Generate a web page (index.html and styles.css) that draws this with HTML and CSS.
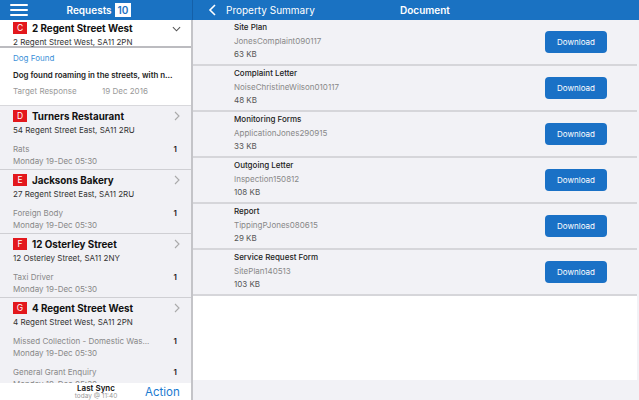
FILE: index.html
```html
<!DOCTYPE html>
<html>
<head>
<meta charset="utf-8">
<link rel="stylesheet" href="styles.css">
</head>
<body>
<div class="app">
  <aside class="left">
    <header class="lhead">
      <span class="burger"><i></i><i></i><i></i></span>
      <span class="ltitle">Requests <b class="count">10</b></span>
    </header>
    <div class="llist">
      <div class="item sel">
        <div class="top">
          <div class="trow"><span class="badge">C</span><span class="name">2 Regent Street West</span>
            <svg class="chev-down" viewBox="0 0 10 6"><path d="M1 1l4 4 4-4" fill="none" stroke="#555" stroke-width="1.2"/></svg>
          </div>
          <div class="addr">2 Regent Street West, SA11 2PN</div>
        </div>
        <div class="detail">
          <div class="dtype">Dog Found</div>
          <div class="ddesc">Dog found roaming in the streets, with n...</div>
          <div class="dtarget"><span class="dl">Target Response</span><span>19 Dec 2016</span></div>
        </div>
      </div>
      <div class="item">
        <div class="trow"><span class="badge">D</span><span class="name">Turners Restaurant</span>
          <svg class="chev" viewBox="0 0 6 10"><path d="M1 1l4 4-4 4" fill="none" stroke="#aaa" stroke-width="1.1"/></svg></div>
        <div class="addr">54 Regent Street East, SA11 2RU</div>
        <div class="sub"><div class="srow"><span>Rats</span><b>1</b></div><div class="sdate">Monday 19-Dec 05:30</div></div>
      </div>
      <div class="item">
        <div class="trow"><span class="badge">E</span><span class="name">Jacksons Bakery</span>
          <svg class="chev" viewBox="0 0 6 10"><path d="M1 1l4 4-4 4" fill="none" stroke="#aaa" stroke-width="1.1"/></svg></div>
        <div class="addr">27 Regent Street East, SA11 2RU</div>
        <div class="sub"><div class="srow"><span>Foreign Body</span><b>1</b></div><div class="sdate">Monday 19-Dec 05:30</div></div>
      </div>
      <div class="item">
        <div class="trow"><span class="badge">F</span><span class="name">12 Osterley Street</span>
          <svg class="chev" viewBox="0 0 6 10"><path d="M1 1l4 4-4 4" fill="none" stroke="#aaa" stroke-width="1.1"/></svg></div>
        <div class="addr">12 Osterley Street, SA11 2NY</div>
        <div class="sub"><div class="srow"><span>Taxi Driver</span><b>1</b></div><div class="sdate">Monday 19-Dec 05:30</div></div>
      </div>
      <div class="item last">
        <div class="trow"><span class="badge">G</span><span class="name">4 Regent Street West</span>
          <svg class="chev" viewBox="0 0 6 10"><path d="M1 1l4 4-4 4" fill="none" stroke="#aaa" stroke-width="1.1"/></svg></div>
        <div class="addr">4 Regent Street West, SA11 2PN</div>
        <div class="sub"><div class="srow"><span>Missed Collection - Domestic Was...</span><b>1</b></div><div class="sdate">Monday 19-Dec 05:30</div></div>
        <div class="sub"><div class="srow"><span>General Grant Enquiry</span><b>1</b></div><div class="sdate">Monday 19-Dec 05:30</div></div>
      </div>
    </div>
    <footer class="lfoot">
      <div class="sync"><b>Last Sync</b><span>today @ 11:40</span></div>
      <span class="action">Action</span>
    </footer>
  </aside>
  <main class="right">
    <header class="rhead">
      <span class="back"><svg viewBox="0 0 8 12"><path d="M7 1L2 6l5 5" fill="none" stroke="#fff" stroke-width="1.6"/></svg>Property Summary</span>
      <span class="rtitle">Document</span>
    </header>
    <div class="docs">
      <div class="doc"><div class="dinfo"><b>Site Plan</b><span class="fn">JonesComplaint090117</span><span class="sz">63 KB</span></div><button class="btn">Download</button></div>
      <div class="doc"><div class="dinfo"><b>Complaint Letter</b><span class="fn">NoiseChristineWilson010117</span><span class="sz">48 KB</span></div><button class="btn">Download</button></div>
      <div class="doc"><div class="dinfo"><b>Monitoring Forms</b><span class="fn">ApplicationJones290915</span><span class="sz">33 KB</span></div><button class="btn">Download</button></div>
      <div class="doc"><div class="dinfo"><b>Outgoing Letter</b><span class="fn">Inspection150812</span><span class="sz">108 KB</span></div><button class="btn">Download</button></div>
      <div class="doc"><div class="dinfo"><b>Report</b><span class="fn">TippingPJones080615</span><span class="sz">29 KB</span></div><button class="btn">Download</button></div>
      <div class="doc"><div class="dinfo"><b>Service Request Form</b><span class="fn">SitePlan140513</span><span class="sz">103 KB</span></div><button class="btn">Download</button></div>
      <div class="blank"></div>
    </div>
  </main>
</div>
</body>
</html>
```
FILE: styles.css
```css
* { box-sizing: border-box; margin: 0; padding: 0; }
html, body { width: 639px; height: 400px; overflow: hidden; }
body { font-family: Inter, "Liberation Sans", Arial, sans-serif; background: #f2f2f6; color: #222; }
.app { display: flex; width: 639px; height: 400px; }

.left { width: 193px; display: flex; flex-direction: column; background: #f1f1f5; }
.lhead { height: 20px; background: #1a72c2; position: relative; display: flex; align-items: center; justify-content: center; border-right: 1px solid #1560a8; }
.burger { position: absolute; left: 10px; top: 4px; width: 18px; height: 12px; display: flex; flex-direction: column; justify-content: space-between; }
.burger i { display: block; height: 2px; background: #fff; border-radius: 1px; }
.ltitle { color: #fff; font-weight: 600; font-size: 10px; padding-left: 6px; display: flex; align-items: center; gap: 3px; }
.count { background: #fff; color: #1a72c2; font-size: 10px; font-weight: 600; padding: 1px 3px; line-height: 12px; height: 14px; }

.llist { flex: 1; overflow: hidden; border-right: 2px solid #c4c4c8; }
.item { padding: 3px 13px 4px 13px; border-bottom: 1px solid #cfcfd3; height: 64px; }
.item.last { height: auto; border-bottom: none; }
.item.sel { background: #fff; padding: 0; height: 86px; border-bottom: 1px solid #d8d8dc; }
.item.sel .top { padding: 1px 10px 0 13px; border-bottom: 2px solid #bcbcc0; height: 28px; }
.trow { display: flex; align-items: center; height: 14px; position: relative; }
.badge { width: 14px; height: 12px; background: #e3181d; color: #fff; font-size: 8.5px; text-align: center; line-height: 12px; margin-right: 5px; }
.name { font-weight: 700; font-size: 9.8px; color: #111; }
.chev { position: absolute; right: -2px; top: 2px; width: 6px; height: 10px; }
.chev-down { position: absolute; right: 0; top: 5px; width: 9px; height: 6px; }
.addr { font-size: 8px; color: #333; line-height: 14px; }
.sub { margin-top: 6px; }
.sub + .sub { margin-top: 7px; }
.srow { display: flex; justify-content: space-between; font-size: 8px; color: #888; line-height: 12px; padding-right: 1px; }
.srow b { color: #222; font-weight: 600; }
.sdate { font-size: 8px; color: #888; line-height: 12px; }
.detail { padding: 4px 13px 0 13px; }
.dtype { color: #3b8fd8; font-size: 8px; line-height: 12px; }
.ddesc { font-weight: 600; font-size: 7.9px; color: #222; line-height: 12px; margin-top: 5px; white-space: nowrap; }
.dtarget { font-size: 8px; color: #999; line-height: 12px; margin-top: 4px; display: flex; }
.dl { width: 89px; }

.lfoot { height: 17px; background: #fff; display: flex; align-items: center; border-right: 2px solid #c4c4c8; }
.sync { width: 70px; margin-left: 61px; display: flex; flex-direction: column; align-items: center; line-height: 8px; }
.sync b { font-size: 8px; font-weight: 600; color: #111; }
.sync span { font-size: 6.5px; color: #999; }
.action { color: #1a7ad0; font-size: 11.5px; margin-left: 14px; }

.right { flex: 1; display: flex; flex-direction: column; }
.rhead { height: 20px; background: #1a72c2; display: flex; align-items: center; color: #fff; font-size: 10px; }
.back { display: flex; align-items: center; margin-left: 15px; width: 192px; }
.back svg { width: 8px; height: 12px; margin-right: 10px; }
.rtitle { font-weight: 600; }
.docs { flex: 1; display: flex; flex-direction: column; margin-right: 2px; }
.doc { height: 46px; display: flex; align-items: center; justify-content: space-between; padding: 0 30px 0 41px; border-bottom: 2px solid #d6d6da; background: #f2f2f6; }
.dinfo { display: flex; flex-direction: column; font-size: 8px; line-height: 13.5px; margin-top: -1px; }
.dinfo b { font-weight: 500; color: #222; }
.fn { color: #888; }
.sz { color: #555; }
.btn { width: 62px; height: 22px; border: none; border-radius: 4px; background: #1a71c6; color: #fff; font-family: inherit; font-size: 8px; }
.blank { height: 84px; background: #fff; }
```
